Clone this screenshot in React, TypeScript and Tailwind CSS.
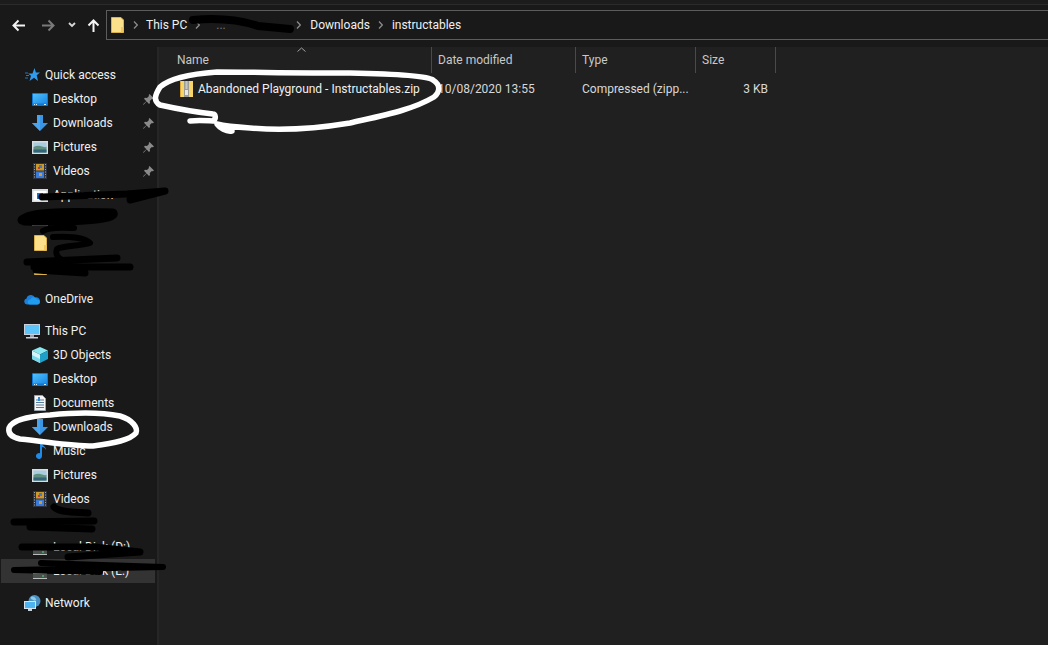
import React from "react";

const FolderIcon = () => (
  <svg width="13" height="16" viewBox="0 0 13 16" className="shrink-0">
    <path d="M.5.5h9.500l2.500 2.500v12.500H.5z" fill="#fde08a" stroke="#d9b24c" strokeWidth="1" />
    <path d="M10 10h2.500v5.500H10z" fill="#f2c75c" />
  </svg>
);
const DesktopIcon = () => (
  <svg width="16" height="13" viewBox="0 0 16 13" className="shrink-0">
    <defs>
      <linearGradient id="desk" x1="0" y1="0" x2="1" y2="1">
        <stop offset="0" stopColor="#4fc0fa" />
        <stop offset="1" stopColor="#1a86e6" />
      </linearGradient>
    </defs>
    <rect width="16" height="13" rx="1" fill="#0f78d4" />
    <rect x="1" y="1" width="14" height="9.500" fill="url(#desk)" />
    <path d="M2 11.500h1M4 11.500h1M12 11.500h2" stroke="#d8f0ff" />
  </svg>
);
const DownloadIcon = () => (
  <svg width="16" height="16" viewBox="0 0 16 16" className="shrink-0">
    <path d="M5 0h6v8h5l-8 8-8-8h5z" fill="#3a96e4" />
    <path d="M5 0h3v16l-8-8h5z" fill="#4aa4ee" />
  </svg>
);
const PicturesIcon = () => (
  <svg width="16" height="13" viewBox="0 0 16 13" className="shrink-0">
    <rect width="16" height="13" fill="#d8dde0" />
    <rect x="1.500" y="1.500" width="13" height="10" fill="#a8cce0" />
    <path d="M1.500 6Q6 4 10 5.500t4.500 0v6h-13z" fill="#5f9080" />
    <path d="M1.500 8.500h13v3h-13z" fill="#33657a" />
  </svg>
);
const VideosIcon = () => (
  <svg width="14" height="16" viewBox="0 0 14 16" className="shrink-0">
    <rect width="14" height="16" fill="#2d3440" />
    <rect x="3" y="1" width="8" height="6.500" fill="#c89a30" />
    <rect x="3" y="8.500" width="8" height="6.500" fill="#3a7ad8" />
    <rect x="6" y="2" width="3" height="3" fill="#3a7ad8" />
    <rect x="5" y="4" width="2" height="2" fill="#c83a30" />
    <rect x="6" y="10" width="3" height="3" fill="#d89a30" />
    <path d="M1 1.500h1M1 4h1M1 6.500h1M1 9h1M1 11.500h1M1 14h1M12 1.500h1M12 4h1M12 6.500h1M12 9h1M12 11.500h1M12 14h1" stroke="#9aa4b0" strokeWidth="1" />
  </svg>
);
const DriveIcon = () => (
  <svg width="14" height="6" viewBox="0 0 14 6" className="shrink-0">
    <rect width="14" height="6" fill="#b8bcbc" />
    <rect y="1" width="14" height="4" fill="#4a504c" />
    <rect x="9" y="2.500" width="2" height="1" fill="#5ad46a" />
  </svg>
);
const AppIcon = () => (
  <svg width="16" height="13" viewBox="0 0 16 13" className="shrink-0">
    <rect width="16" height="13" fill="#d8dde0" />
    <rect x="1.500" y="2" width="13" height="9.500" fill="#fff" />
    <rect x="5" y="4" width="6" height="6" fill="#1173d4" />
  </svg>
);
const DocIcon = () => (
  <svg width="12" height="16" viewBox="0 0 12 16" className="shrink-0">
    <path d="M.5.500h8l3 3v12H.500z" fill="#f4f6f8" stroke="#9aa4ac" />
    <path d="M2 5h2M6 5h4M2 7.500h8M2 10h8M2 12.500h8" stroke="#5a7a9a" strokeWidth="1" />
    <rect x="4" y="2" width="2" height="4" fill="#2f8ae0" />
  </svg>
);
const MusicIcon = () => (
  <svg width="12" height="16" viewBox="0 0 12 16" className="shrink-0">
    <path d="M6 0h2c0 3 4 3 4 7-1-2-2-3-4-3v9a3 3 0 1 1-2-2.800z" fill="#1f8be8" />
  </svg>
);
const ObjectsIcon = () => (
  <svg width="16" height="16" viewBox="0 0 16 16" className="shrink-0">
    <path d="M8 0l8 3.500-8 4-8-4z" fill="#8ce8f0" />
    <path d="M0 3.500l8 4V16l-8-4z" fill="#d0f4f8" />
    <path d="M16 3.500l-8 4V16l8-4z" fill="#1ea0c8" />
    <path d="M0 8l8 4v4l-8-4z" fill="#7ad8e8" />
  </svg>
);
const StarIcon = () => (
  <svg width="15" height="14" viewBox="0 0 15 14" className="shrink-0">
    <path d="M9.500 0l1.400 4.500H15l-3.300 2.800L13 13 9 9.800 4.500 13 6 7.800 3 5.500h4.500z" fill="#2f9cf0" />
    <path d="M0 5h3M1 7.500h3M0 10h3" stroke="#1c78c8" />
  </svg>
);
const OneDriveIcon = () => (
  <svg width="16" height="11" viewBox="0 0 16 11" className="shrink-0">
    <path d="M3 10.500a3 3 0 0 1-.5-5.900A4.500 4.500 0 0 1 11 3.500a3.500 3.500 0 0 1 2.500 7z" fill="#1c7fd8" />
    <path d="M6 10.500a2.500 2.500 0 0 1 .5-5 3.500 3.500 0 0 1 6.500 0 2.500 2.500 0 0 1 .5 5z" fill="#1f9cf0" />
  </svg>
);
const PcIcon = () => (
  <svg width="16" height="15" viewBox="0 0 16 15" className="shrink-0">
    <rect width="16" height="11" fill="#c8d2dc" />
    <rect x="1" y="1" width="14" height="9" fill="#5cc4f8" />
    <rect x="6" y="11" width="4" height="2" fill="#9aa4b0" />
    <rect x="2" y="13" width="12" height="1.500" fill="#c8d2dc" />
  </svg>
);
const NetworkIcon = () => (
  <svg width="17" height="16" viewBox="0 0 17 16" className="shrink-0">
    <circle cx="10.500" cy="6" r="6" fill="#4a90c0" />
    <path d="M7 2c2-1 4 0 5 2s-2 2-3 1-3-1-2-3z" fill="#8cc8e8" />
    <rect x="0" y="6" width="12" height="8" fill="#d4e4ee" />
    <rect x="1" y="7" width="10" height="6" fill="#4eb4f0" />
    <rect x="4" y="14" width="4" height="2" fill="#c8d2dc" />
  </svg>
);
const ZipIcon = () => (
  <svg width="13" height="16" viewBox="0 0 13 16" className="shrink-0">
    <rect width="13" height="16" fill="#f8d56c" />
    <rect x="0" y="0" width="1" height="16" fill="#d9a93c" />
    <rect x="4" y="0" width="5" height="16" fill="#9c9c94" />
    <path d="M5.500 1h2M5.500 3h2M5.500 5h2M5.500 7h2" stroke="#f0f0f0" />
    <rect x="5" y="9" width="3" height="5" fill="#e8e8e4" />
  </svg>
);
const Pin = () => (
  <svg width="11" height="11" viewBox="0 0 11 11" className="shrink-0">
    <path d="M6.500 0L11 4.500 9.800 5.300 8.800 5 6.800 7l.2 2-1 1L3.600 7.400.6 10.800 0 10.200l3.400-3L1 4.800l1-1 2 .2 2-2-.3-1z" fill="#8a8a8a" />
  </svg>
);
const Sep = () => (
  <svg width="5" height="8" viewBox="0 0 5 8" className="shrink-0">
    <path d="M1 .5L4.300 4 1 7.500" fill="none" stroke="#8c8c8c" strokeWidth="1.200" />
  </svg>
);

type RowProps = { icon?: React.ReactNode; label?: string; pin?: boolean; child?: boolean; active?: boolean; low?: boolean };
const Row = ({ icon, label, pin, child = true, active, low }: RowProps) => (
  <div className={`flex h-6 items-center ${child ? "pl-8" : "pl-6"} ${active ? "ml-px mr-[2px] bg-[#333333]" : ""}`}>
    <div className={`flex w-4 justify-center ${active ? "-ml-px" : ""} ${low ? "translate-y-[5px]" : ""}`}>{icon}</div>
    <span className="ml-[5px] flex-1 whitespace-nowrap">{label}</span>
    {pin && <span className="mr-[3px] flex"><Pin /></span>}
  </div>
);

const App = () => (
  <div
    className="relative h-[645px] w-[1048px] overflow-hidden bg-[#191919] text-[12px] text-[#f0f0f0]"
    style={{ fontFamily: 'Roboto, "Noto Sans", sans-serif' }}
  >
    {/* toolbar */}
    <div className="flex h-[47px] flex-col">
      <div className="h-[5px] border-b border-[#2b2b2b] bg-[#1c1c1c]" />
      <div className="flex items-center pt-[5px]">
        <div className="flex w-[106px] items-center">
          <svg width="13" height="13" viewBox="0 0 13 13" className="ml-[12px]">
            <path d="M6.500 1.500L1.500 6.500 6.500 11.500M1.500 6.500H13" fill="none" stroke="#f4f4f4" strokeWidth="2" />
          </svg>
          <svg width="13" height="13" viewBox="0 0 13 13" className="ml-[17px]">
            <path d="M6.500 1.500l5 5-5 5M11.500 6.500H0" fill="none" stroke="#7a7a7a" strokeWidth="2" />
          </svg>
          <svg width="8" height="6" viewBox="0 0 8 6" className="ml-[13px]">
            <path d="M1 1l3 3 3-3" fill="none" stroke="#d8d8d8" strokeWidth="1.800" />
          </svg>
          <svg width="13" height="13" viewBox="0 0 13 13" className="ml-[11px]">
            <path d="M1.500 6.500L6.500 1.500l5 5M6.500 1.500V13" fill="none" stroke="#f5f5f5" strokeWidth="2" />
          </svg>
        </div>
        <div className="flex h-[30px] flex-1 items-center border border-r-0 border-[#5c5c5c] bg-[#191919] pl-[4px]">
          <FolderIcon />
          <span className="ml-[9px] flex"><Sep /></span>
          <span className="ml-[8px]">This PC</span>
          <span className="ml-[8px] flex"><Sep /></span>
          <span className="ml-[16px] w-[80px] text-[#777777]">...</span>
          <span className="flex"><Sep /></span>
          <span className="ml-[9px]">Downloads</span>
          <span className="ml-[8px] flex"><Sep /></span>
          <span className="ml-[9px]">instructables</span>
        </div>
      </div>
    </div>

    <div className="flex h-[598px]">
      {/* sidebar */}
      <div className="flex w-[157px] shrink-0 flex-col pt-[16px]">
        <Row child={false} icon={<StarIcon />} label="Quick access" />
        <Row icon={<DesktopIcon />} label="Desktop" pin />
        <Row icon={<DownloadIcon />} label="Downloads" pin />
        <Row icon={<PicturesIcon />} label="Pictures" pin />
        <Row icon={<VideosIcon />} label="Videos" pin />
        <Row icon={<AppIcon />} label="Application" />
        <Row icon={<AppIcon />} label="" />
        <Row icon={<FolderIcon />} label="" />
        <Row icon={<FolderIcon />} label="" />
        <div className="h-2" />
        <Row child={false} icon={<OneDriveIcon />} label="OneDrive" />
        <div className="h-2" />
        <Row child={false} icon={<PcIcon />} label="This PC" />
        <Row icon={<ObjectsIcon />} label="3D Objects" />
        <Row icon={<DesktopIcon />} label="Desktop" />
        <Row icon={<DocIcon />} label="Documents" />
        <Row icon={<DownloadIcon />} label="Downloads" />
        <Row icon={<MusicIcon />} label="Music" />
        <Row icon={<PicturesIcon />} label="Pictures" />
        <Row icon={<VideosIcon />} label="Videos" />
        <Row icon={<DriveIcon />} label="" />
        <Row icon={<DriveIcon />} label="Local Disk (D:)" low />
        <Row icon={<DriveIcon />} label="Local Disk (E:)" active low />
        <div className="h-2" />
        <Row child={false} icon={<NetworkIcon />} label="Network" />
      </div>
      <div className="w-[2px] shrink-0 bg-[#262626]" />

      {/* file list */}
      <div className="flex-1 bg-[#202020]">
        <div className="relative grid h-[26px] grid-cols-[273px_144px_120px_80px] items-center text-[#c8c8c8]">
          <div className="flex h-full items-center border-r border-[#4a4a4a] pl-[18px]">Name</div>
          <div className="flex h-full items-center border-r border-[#4a4a4a] pl-[6px]">Date modified</div>
          <div className="flex h-full items-center border-r border-[#4a4a4a] pl-[6px]">Type</div>
          <div className="flex h-full items-center border-r border-[#4a4a4a] pl-[6px]">Size</div>
          <svg width="9" height="5" viewBox="0 0 9 5" className="absolute left-[138px] top-0">
            <path d="M.5 4.500l4-3.500 4 3.500" fill="none" stroke="#a0a0a0" />
          </svg>
        </div>
        <div className="mt-[5px] grid h-[22px] grid-cols-[273px_144px_120px_72px] items-center">
          <div className="flex items-center gap-[5px] pl-[21px]">
            <ZipIcon />
            <span className="whitespace-nowrap">Abandoned Playground - Instructables.zip</span>
          </div>
          <div className="pl-[6px] text-[#d8d8d8]">10/08/2020 13:55</div>
          <div className="pl-[6px] text-[#d8d8d8]">Compressed (zipp...</div>
          <div className="text-right text-[#d8d8d8]">3 KB</div>
        </div>
      </div>
    </div>

    {/* hand-drawn annotations over the screenshot */}
    <svg width="1048" height="645" viewBox="0 0 1048 645" className="pointer-events-none absolute left-0 top-0">
      <g fill="none" stroke="#000" strokeLinecap="round" strokeLinejoin="round">
        <path d="M193 20C215 18 240 20 258 26L290 29" strokeWidth="8" />
        <path d="M42 197L127 194L165 191L130 200" strokeWidth="7" />
        <path d="M22 220C30 212 60 212 113 213C116 219 80 222 24 221" strokeWidth="9" />
        <path d="M43 231C50 226 70 228 74 228M53 237C70 236 85 238 90 243C80 246 62 246 57 249C55 254 58 258 62 260" strokeWidth="6" />
        <path d="M27 262L117 258M34 267L130 267M36 270L85 273" strokeWidth="7" />
        <path d="M54 507C60 513 76 512 88 513M14 522L94 521M30 527L92 529" strokeWidth="7" />
        <path d="M22 547L95 547L140 552L68 557" strokeWidth="7" />
        <path d="M41 563L163 567L14 570L100 572" strokeWidth="6" />
      </g>
      <g fill="none" stroke="#fff" strokeWidth="5.500" strokeLinecap="round" strokeLinejoin="round">
        <path d="M190 121C200 120 210 121 213 121C217 118 215 114 213 114C195 112 178 109 160 105C153 101 155 95 160 87C170 78 190 74 217 72C250 72 293 73 350 73C400 74 428 76 433 80C441 85 440 92 434 97C412 110 385 115 350 123C320 128 283 131 250 128C235 127 225 126 217 124C220 128 226 132 232 131" />
        <path d="M9 428C12 420 30 416 50 415C70 413 100 412 120 416C133 420 138 428 136 433C130 440 115 443 93 446C70 446 50 442 20 439C11 437 8 433 9 428" />
      </g>
    </svg>
  </div>
);

export default App;
